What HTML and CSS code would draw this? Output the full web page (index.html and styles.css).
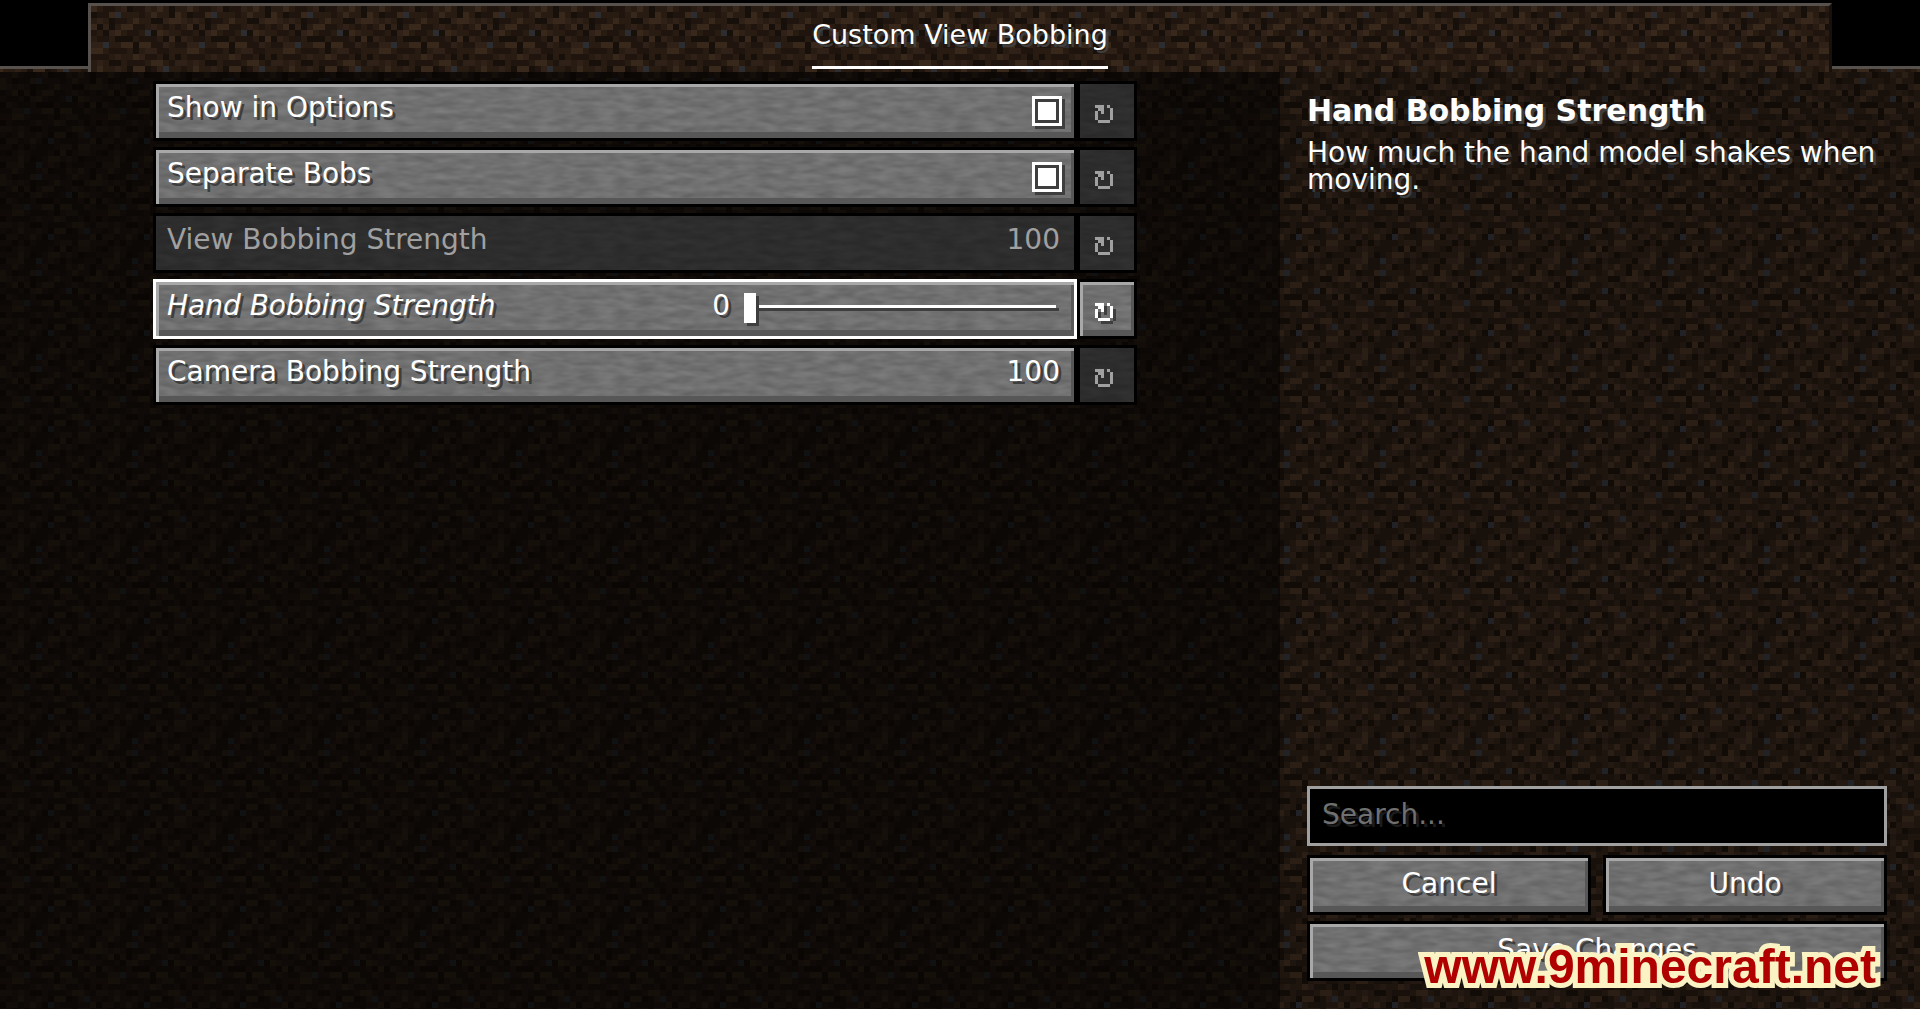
FILE: index.html
```html
<!DOCTYPE html>
<html lang="en">
<head>
    <meta charset="UTF-8">
    <meta name="viewport" content="width=device-width, initial-scale=1.0">
    <title>Custom View Bobbing</title>
    <link rel="stylesheet" href="styles.css">
</head>
<body>

    <svg class="sprite" aria-hidden="true">
        <symbol id="reset" viewBox="0 0 6 6">
            <path d="M0 0h3v3h-1v-1h-1v-1h-1zM4 0h1v1h-1zM5 1h1v4h-1zM0 2h1v3h-1zM1 5h4v1h-4z"/>
        </symbol>
    </svg>

    <header class="tabs">
        <div class="tabs-side"></div>
        <nav class="tabs-main">
            <a class="tab" href="#options">Custom View Bobbing</a>
        </nav>
        <div class="tabs-side"></div>
    </header>

    <div class="screen">
        <main class="options" id="options">
            <div class="row">
                <label class="option">
                    <span class="name">Show in Options</span>
                    <input class="check" type="checkbox" checked>
                </label>
                <button class="reset" aria-label="Reset Show in Options" disabled><svg><use href="#reset"/></svg></button>
            </div>
            <div class="row">
                <label class="option">
                    <span class="name">Separate Bobs</span>
                    <input class="check" type="checkbox" checked>
                </label>
                <button class="reset" aria-label="Reset Separate Bobs" disabled><svg><use href="#reset"/></svg></button>
            </div>
            <div class="row">
                <div class="option disabled">
                    <span class="name">View Bobbing Strength</span>
                    <span class="value">100</span>
                </div>
                <button class="reset" aria-label="Reset View Bobbing Strength" disabled><svg><use href="#reset"/></svg></button>
            </div>
            <div class="row">
                <div class="option selected">
                    <label class="name" for="hand">Hand Bobbing Strength</label>
                    <output class="value" for="hand" id="handValue">0</output>
                    <input class="slider" id="hand" type="range" min="0" max="100" value="0">
                </div>
                <button class="reset" aria-label="Reset Hand Bobbing Strength"><svg><use href="#reset"/></svg></button>
            </div>
            <div class="row">
                <div class="option">
                    <span class="name">Camera Bobbing Strength</span>
                    <span class="value">100</span>
                </div>
                <button class="reset" aria-label="Reset Camera Bobbing Strength" disabled><svg><use href="#reset"/></svg></button>
            </div>
        </main>

        <aside class="side">
            <h2>Hand Bobbing Strength</h2>
            <p>How much the hand model shakes when moving.</p>

            <div class="actions">
                <input class="search" type="text" placeholder="Search..." aria-label="Search">
                <div class="buttons">
                    <button class="button">Cancel</button>
                    <button class="button">Undo</button>
                </div>
                <button class="button">Save Changes</button>
            </div>
        </aside>
    </div>

    <div class="watermark">www.9minecraft.net</div>

    <script>
        const hand = document.getElementById('hand');
        hand.addEventListener('input', () => {
            document.getElementById('handValue').textContent = hand.value;
        });
    </script>
</body>
</html>
```
FILE: styles.css
```css
:root {
    --dirt: url("data:image/svg+xml,%3Csvg xmlns='http://www.w3.org/2000/svg' width='96' height='96' viewBox='0 0 16 16' shape-rendering='crispEdges'%3E%3Cpath fill='%23271b12' d='M0 0h16v16H0z'/%3E%3Cg transform='translate(0 .5)'%3E%3Cpath stroke='%231f150e' d='M4 0h2M9 0h2M3 1h2M10 1h1M6 2h2M0 3h1M9 3h2M14 3h1M1 4h2M8 4h2M3 5h2M10 5h3M0 6h2M12 6h2M5 7h3M13 7h2M2 8h3M11 8h2M8 9h3M15 9h1M1 10h1M12 10h1M3 11h1M10 11h3M6 12h3M12 12h1M0 13h1M5 13h3M14 14h2M6 14h1M4 15h2M12 15h2'/%3E%3Cpath stroke='%2338271b' d='M2 0h1M13 0h1M0 1h1M5 1h1M12 1h1M0 2h1M9 2h1M15 2h1M2 3h1M7 3h2M6 4h1M13 4h1M15 5h1M7 6h2M10 6h2M2 7h2M9 8h1M12 9h2M3 10h1M9 10h2M5 11h1M15 11h1M13 12h2M10 13h1M3 14h1M8 14h2M3 15h1'/%3E%3Cpath stroke='%232f2118' d='M7 0h1M11 0h1M1 2h1M3 2h1M14 2h1M4 3h1M12 3h1M5 4h1M14 4h1M1 5h1M2 6h2M14 6h1M11 7h2M6 8h1M10 8h1M0 9h2M3 9h1M6 10h1M13 10h1M1 11h2M10 12h2M3 13h1M13 13h2M11 14h1M1 15h2M8 15h1'/%3E%3Cpath stroke='%23170f09' d='M8 0h1M15 0h1M2 1h1M15 1h1M5 2h1M12 2h2M3 3h1M5 3h1M4 4h1M12 4h1M0 5h1M6 5h3M14 5h1M9 6h1M9 7h1M0 8h1M14 8h1M5 9h2M8 10h1M11 10h1M0 11h1M7 11h1M2 12h1M4 12h1M1 13h1M9 13h1M11 13h1M5 14h1M13 14h1M0 15h1M10 15h1'/%3E%3Cpath stroke='%232b2d30' d='M6 1h1M11 4h1M4 6h1M14 10h1M8 11h1M6 15h1'/%3E%3C/g%3E%3C/svg%3E");
    --stone: url("data:image/svg+xml,%3Csvg xmlns='http://www.w3.org/2000/svg' width='600' height='60'%3E%3Cfilter id='n' x='0' y='0' width='100%25' height='100%25' color-interpolation-filters='sRGB'%3E%3CfeTurbulence type='fractalNoise' baseFrequency='.05 .16' numOctaves='2' seed='4' stitchTiles='stitch'/%3E%3CfeColorMatrix values='.14 0 0 0 .37 .14 0 0 0 .37 .14 0 0 0 .37 0 0 0 0 1'/%3E%3C/filter%3E%3Crect width='600' height='60' filter='url(%23n)'/%3E%3C/svg%3E");
    --line: #56514d;
    --shadow: #3e3e3e;
}

* {
    box-sizing: border-box;
}

body {
    margin: 0;
    min-height: 100vh;
    display: flex;
    flex-direction: column;
    background-color: black;
    color: white;
    font-family: "DejaVu Sans", sans-serif;
    font-size: 28px;
    line-height: 33px;
    text-shadow: 3px 3px 0 var(--shadow);
}

.sprite {
    display: none;
}

/* top tab bar */
.tabs {
    display: flex;
    height: 72px;
    padding-top: 3px;
    background: linear-gradient(black, black) top / 100% 66px no-repeat, var(--dirt) -21px 6px;
}

.tabs-side {
    width: 88px;
    height: 66px;
    border-bottom: 3px solid var(--line);
}

.tabs-main {
    flex: 1;
    display: flex;
    justify-content: center;
    border: 3px solid var(--line);
    border-right-color: #17110d;
    border-bottom: none;
    background: var(--dirt) -108px 0;
}

.tab {
    height: 63px;
    padding-top: 12px;
    border-bottom: 3px solid white;
    color: white;
    font-size: 27px;
    text-decoration: none;
}

/* option list + description */
.screen {
    flex: 1;
    display: grid;
    grid-template-columns: 2fr 1fr;
}

.options {
    display: flex;
    flex-direction: column;
    gap: 6px;
    padding: 9px 143px 9px 153px;
    background: linear-gradient(rgba(0, 0, 0, 0.62), rgba(0, 0, 0, 0.62)), var(--dirt) 0 0;
}

.row {
    display: flex;
}

.option,
.reset,
.button {
    height: 60px;
    border: 3px solid black;
    background: var(--stone);
    box-shadow: inset 3px 3px 0 #a8a8a8, inset -3px -6px 0 #575757;
}

.option {
    flex: 1;
    display: flex;
    align-items: center;
    padding: 0 12px 0 11px;
}

.name {
    flex: 1;
    padding-bottom: 8px;
}

.value {
    padding: 0 2px 8px 0;
}

.option.disabled,
.reset:disabled {
    background: linear-gradient(rgba(0, 0, 0, 0.6), rgba(0, 0, 0, 0.6)), var(--stone);
    box-shadow: none;
    color: #a0a0a0;
    text-shadow: none;
}

.option.selected {
    border-color: white;
}

.selected .name {
    font-style: italic;
}

.check {
    appearance: none;
    width: 30px;
    height: 30px;
    margin: 0;
    border: 3px solid white;
    background-color: var(--shadow);
    box-shadow: 3px 3px 0 var(--shadow);
}

.check:checked {
    padding: 3px;
    background: linear-gradient(white, white) content-box, var(--shadow);
}

.slider {
    appearance: none;
    width: 312px;
    height: 30px;
    margin: 0 6px 5px 12px;
    background: none;
}

.slider::-webkit-slider-runnable-track {
    height: 3px;
    background-color: white;
    box-shadow: 3px 3px 0 var(--shadow);
}

.slider::-webkit-slider-thumb {
    appearance: none;
    width: 12px;
    height: 30px;
    margin-top: -12px;
    background-color: white;
    box-shadow: 3px 3px 0 var(--shadow);
}

.reset {
    width: 60px;
    padding: 6px 6px 0 0;
    color: white;
}

.reset svg {
    display: block;
    width: 18px;
    height: 18px;
    margin: auto;
    fill: currentColor;
    shape-rendering: crispEdges;
    filter: drop-shadow(3px 3px 0 var(--shadow));
}

.reset:disabled svg {
    filter: none;
}

/* right panel */
.side {
    display: flex;
    flex-direction: column;
    padding: 21px 33px 28px 27px;
    background: linear-gradient(rgba(0, 0, 0, 0.24), rgba(0, 0, 0, 0.24)), var(--dirt) 64px 0;
}

.side h2 {
    margin: 0;
    font-size: 30px;
    line-height: 36px;
}

.side p {
    margin: 10px 0 0;
    line-height: 27px;
}

.actions {
    display: flex;
    flex-direction: column;
    gap: 6px;
    margin-top: auto;
}

.search {
    width: 100%;
    height: 60px;
    margin-bottom: 3px;
    padding: 0 12px 3px;
    border: 3px solid #a0a0a0;
    background-color: black;
    color: white;
    font: inherit;
}

.search::placeholder {
    color: #707070;
    text-shadow: 3px 3px 0 #1c1c1c;
}

.buttons {
    display: grid;
    grid-template-columns: 1fr 1fr;
    gap: 12px;
}

.button {
    padding: 0 0 3px;
    color: white;
    font: inherit;
    text-shadow: inherit;
}

.watermark {
    position: fixed;
    right: 44px;
    bottom: 12px;
    color: #b00000;
    font-family: "Liberation Sans Narrow", "Liberation Sans", sans-serif;
    font-size: 48px;
    font-weight: bold;
    line-height: 60px;
    text-shadow: none;
    -webkit-text-stroke: 10px #fbf3c4;
    paint-order: stroke fill;
    pointer-events: none;
}
```
